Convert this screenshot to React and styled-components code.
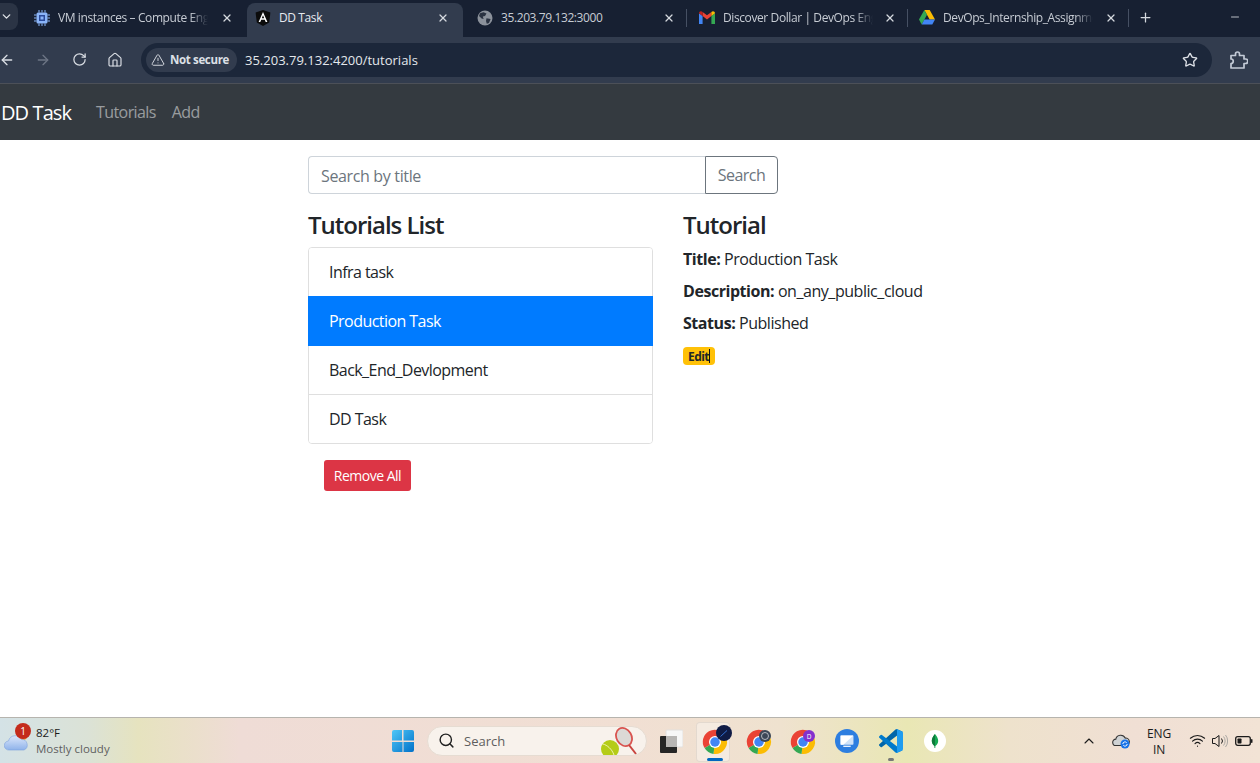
import React from "react";
import styled, { createGlobalStyle } from "styled-components";
import {
  ArrowLeft,
  ArrowRight,
  RotateCw,
  Home,
  TriangleAlert,
  Star,
  X,
  Plus,
  Minus,
  ChevronDown,
  ChevronUp,
  Search as SearchIcon,
  Wifi,
} from "lucide-react";

const Global = createGlobalStyle`
  html, body { margin: 0; padding: 0; height: 100%; overflow: hidden; }
  body { font-family: "Open Sans", "Noto Sans", sans-serif; color: #212529; background: #fff; }
  #root { height: 100%; }
  * { box-sizing: border-box; }
`;

const Screen = styled.div`
  width: 1260px;
  height: 763px;
  display: flex;
  flex-direction: column;
  overflow: hidden;
`;

/* browser chrome */
const TabStrip = styled.div`
  height: 37px;
  background: #172032;
  display: flex;
  align-items: flex-end;
  color: #c7ccd4;
  flex: none;
`;

const TabSearch = styled.div`
  width: 18px;
  height: 27px;
  margin: 0 8px 7px 0;
  background: #2b3445;
  border-radius: 0 8px 8px 0;
  display: flex;
  align-items: center;
  justify-content: flex-start;
  color: #dfe3e8;
`;

const Tab = styled.div`
  position: relative;
  width: ${(p) => (p.$active ? "216px" : "221px")};
  margin-right: ${(p) => (p.$active ? "5px" : "0")};
  height: 34px;
  display: flex;
  align-items: center;
  padding: 0 0 5px ${(p) => p.$pad || 8}px;
  border-radius: 8px 8px 0 0;
  background: ${(p) => (p.$active ? "#323c4e" : "transparent")};
  color: ${(p) => (p.$active ? "#e6e9ee" : "#c7ccd4")};

  &::after {
    content: "";
    display: ${(p) => (p.$sep ? "block" : "none")};
    position: absolute;
    right: 2px;
    top: 6px;
    height: 18px;
    width: 1px;
    background: #465063;
  }
`;

const TabIcon = styled.span`
  width: 16px;
  height: 16px;
  flex: none;
  display: flex;
  align-items: center;
  justify-content: center;
`;

const TabTitle = styled.span`
  width: 150px;
  margin-left: 8px;
  font-size: 12px;
  letter-spacing: -0.4px;
  white-space: nowrap;
  overflow: hidden;
  -webkit-mask-image: ${(p) =>
    p.$fade ? "linear-gradient(to right, #000 88%, transparent)" : "none"};
  mask-image: ${(p) =>
    p.$fade ? "linear-gradient(to right, #000 88%, transparent)" : "none"};
`;

const TabClose = styled.span`
  margin-left: auto;
  margin-right: 14px;
  display: flex;
  color: #d5d9df;
`;

const NewTab = styled.span`
  display: flex;
  margin: 0 0 12px 7px;
  color: #d5d9df;
`;

const WindowButton = styled.span`
  display: flex;
  margin: 0 19px 14px auto;
  color: #f0f2f5;
`;

const Toolbar = styled.div`
  height: 47px;
  flex: none;
  background: #323c4e;
  border-bottom: 1px solid #4c5058;
  display: flex;
  align-items: center;
  padding-bottom: 1px;
  color: #d5d9df;
`;

const NavButton = styled.span`
  width: 36px;
  display: flex;
  justify-content: center;
  color: ${(p) => (p.$off ? "#6d7585" : "#d9dde3")};
`;

const NavGroup = styled.div`
  display: flex;
  margin-left: -11px;
`;

const AddressBar = styled.div`
  width: 1071px;
  height: 34px;
  margin-left: 8px;
  border-radius: 17px;
  background: #1c273a;
  display: flex;
  align-items: center;
  padding: 0 14px 0 5px;
`;

const SecurityChip = styled.div`
  width: 91px;
  height: 24px;
  border-radius: 12px;
  background: #323c4e;
  display: flex;
  align-items: center;
  gap: 5px;
  padding-left: 5px;
  font-size: 11.5px;
  font-weight: 700;
  letter-spacing: -0.35px;
  color: #dde0e6;
  white-space: nowrap;
`;

const Url = styled.span`
  margin-left: 8px;
  font-size: 13px;
  letter-spacing: 0;
  color: #e4e7ec;
`;

const BarEnd = styled.span`
  margin-left: auto;
  display: flex;
  color: #dde0e6;
`;

const Extensions = styled.span`
  margin-left: 16px;
  display: flex;
`;

/* app */
const NavBar = styled.nav`
  height: 56px;
  flex: none;
  background: #343a40;
  display: flex;
  align-items: center;
  padding-left: 1px;
`;

const Brand = styled.a`
  font-size: 20px;
  letter-spacing: -0.9px;
  color: #fff;
  margin-right: 25px;
`;

const NavLink = styled.a`
  font-size: 16px;
  letter-spacing: -0.6px;
  color: rgba(255, 255, 255, 0.5);
  margin-right: 16px;
`;

const Page = styled.main`
  flex: 1;
  background: #fff;
  padding: 16px 0 0 308px;
`;

const SearchRow = styled.div`
  display: flex;
  width: 470px;
  height: 38px;
  margin-bottom: 16px;
`;

const SearchInput = styled.div`
  flex: 1;
  border: 1px solid #ced4da;
  border-right: 0;
  border-radius: 4px 0 0 4px;
  padding: 2px 12px 0;
  display: flex;
  align-items: center;
  font-size: 16px;
  letter-spacing: -0.35px;
  color: #6c757d;
`;

const SearchButton = styled.div`
  width: 73px;
  border: 1px solid #6c757d;
  border-radius: 0 4px 4px 0;
  display: flex;
  align-items: center;
  justify-content: center;
  font-size: 16px;
  letter-spacing: -0.5px;
  color: #6c757d;
`;

const Columns = styled.div`
  display: grid;
  grid-template-columns: 345px 300px;
  column-gap: 30px;
`;

const Heading = styled.h4`
  margin: 0 0 7px;
  font-size: 24px;
  line-height: 30px;
  font-weight: 600;
  letter-spacing: -1px;
  color: #212529;
`;

const List = styled.ul`
  list-style: none;
  margin: 0;
  padding: 0;
  border: 1px solid #dfdfdf;
  border-radius: 4px;
`;

const Item = styled.li`
  height: ${(p) => (p.$active ? "50px" : p.$line ? "49px" : "48px")};
  margin: ${(p) => (p.$active ? "0 -1px" : "0")};
  padding-left: ${(p) => (p.$active ? "21px" : "20px")};
  display: flex;
  align-items: center;
  font-size: 16px;
  letter-spacing: -0.55px;
  background: ${(p) => (p.$active ? "#007bff" : "#fff")};
  color: ${(p) => (p.$active ? "#fff" : "#212529")};
  border-top: ${(p) => (p.$line ? "1px solid #dfdfdf" : "0")};

  &:first-child {
    border-radius: 3px 3px 0 0;
  }

  &:last-child {
    border-radius: 0 0 3px 3px;
  }
`;

const DangerButton = styled.div`
  width: 87px;
  height: 31px;
  margin: 16px 0 0 16px;
  border-radius: 3px;
  background: #dc3545;
  color: #fff;
  font-size: 14px;
  letter-spacing: -0.5px;
  display: flex;
  align-items: center;
  justify-content: center;
`;

const Field = styled.div`
  font-size: 16px;
  line-height: 24px;
  letter-spacing: -0.45px;
  margin-bottom: 8px;

  strong {
    font-weight: 700;
  }
`;

const Badge = styled.span`
  display: inline-flex;
  align-items: center;
  justify-content: center;
  width: 32px;
  height: 18px;
  margin-top: 4px;
  border-radius: 4px;
  background: #ffc107;
  font-size: 12px;
  font-weight: 700;
  letter-spacing: -0.6px;
  color: #212529;
`;

const Caret = styled.span`
  display: inline-block;
  width: 1px;
  height: 14px;
  background: #111;
`;

/* taskbar */
const Taskbar = styled.footer`
  height: 46px;
  flex: none;
  border-top: 1px solid #b6b4ae;
  background: linear-gradient(
    90deg,
    #d4e2e6 0%,
    #dbe2d6 7%,
    #e6e3bf 11%,
    #efdcd6 19%,
    #f1dfd3 50%,
    #efe2cf 62%,
    #e9e7b4 72%,
    #eee2cc 80%,
    #f0dfd4 90%,
    #f2e3d5 100%
  );
  display: flex;
  align-items: center;
`;

const Weather = styled.div`
  position: relative;
  width: 391px;
  flex: none;
  display: flex;
  align-items: center;
  padding-left: 4px;
  height: 100%;
`;

const WeatherBadge = styled.span`
  position: absolute;
  left: 15px;
  top: 5px;
  width: 16px;
  height: 16px;
  border-radius: 50%;
  background: #c42b1c;
  color: #fff;
  font-size: 10px;
  display: flex;
  align-items: center;
  justify-content: center;
`;

const WeatherText = styled.div`
  margin-left: 6px;
  font-size: 11.5px;
  line-height: 16px;
  letter-spacing: 0;
  color: #1b1b1b;

  span {
    display: block;
    color: #5f5f5f;
  }
`;

const TaskSearch = styled.div`
  position: relative;
  width: 220px;
  height: 30px;
  margin-left: 12px;
  border-radius: 15px;
  background: #f8f2ec;
  border: 1px solid #e6dcd2;
  display: flex;
  align-items: center;
  padding-left: 10px;
  font-size: 13px;
  color: #5e5e5e;
  gap: 9px;
  overflow: hidden;
`;

const SearchArt = styled.svg`
  position: absolute;
  right: 8px;
  bottom: -1px;
`;

const TaskIcon = styled.span`
  position: relative;
  width: 44px;
  height: 46px;
  flex: none;
  display: flex;
  align-items: center;
  justify-content: center;
  margin-left: ${(p) => p.$ml || 0}px;

  &::before {
    content: "";
    display: ${(p) => (p.$focus ? "block" : "none")};
    position: absolute;
    left: 3px;
    right: 7px;
    top: 4px;
    bottom: 2px;
    border-radius: 4px;
    background: rgba(255, 255, 255, 0.35);
    border: 1px solid rgba(220, 210, 200, 0.7);
  }

  &::after {
    content: "";
    display: ${(p) => (p.$open ? "block" : "none")};
    position: absolute;
    bottom: 3px;
    left: 50%;
    transform: translateX(-50%);
    width: ${(p) => (p.$focus ? "16px" : "6px")};
    height: 3px;
    border-radius: 2px;
    background: ${(p) => (p.$focus ? "#0067c0" : "#777")};
  }

  svg {
    position: relative;
    z-index: 1;
  }
`;

const Tray = styled.div`
  margin-left: auto;
  display: flex;
  align-items: center;
  color: #1b1b1b;
`;

const TrayItem = styled.span`
  display: flex;
  margin-right: ${(p) => p.$mr || 0}px;
`;

const Lang = styled.div`
  width: 32px;
  margin-right: 14px;
  padding-top: 2px;
  text-align: center;
  font-size: 12px;
  line-height: 16px;
  letter-spacing: -0.1px;
`;

/* drawings */
const ChipIcon = () => (
  <svg width="16" height="16" viewBox="0 0 16 16">
    <rect x="2.5" y="2.5" width="11" height="11" rx="1.5" fill="#8ab4f8" />
    <rect x="5" y="5" width="6" height="6" fill="#2a4a9a" />
    <rect x="6.5" y="6.5" width="3" height="3" fill="#8ab4f8" />
    <path d="M5 0v2.5M8 0v2.5M11 0v2.5M5 13.5V16M8 13.5V16M11 13.5V16M0 5h2.5M0 8h2.5M0 11h2.5M13.5 5H16M13.5 8H16M13.5 11H16" stroke="#8ab4f8" strokeWidth="1" />
  </svg>
);

const AngularIcon = () => (
  <svg width="16" height="16" viewBox="0 0 16 16">
    <path d="M8 0 15.4 2.6 14.2 12.4 8 16 1.8 12.4.6 2.6Z" fill="#0b0b0b" />
    <path d="M8 2 3.6 12h1.7l.9-2.3h3.6l.9 2.3h1.7ZM6.8 8.3 8 5.3l1.2 3Z" fill="#fff" />
  </svg>
);

const GlobeIcon = () => (
  <svg width="16" height="16" viewBox="0 0 16 16">
    <circle cx="8" cy="8" r="7.5" fill="#8b919b" />
    <path d="M3 3.2 6.5 2.2 9.5 3.6 8 6 5.8 6.4 6.6 9 4.6 8.6 2 6ZM9.5 8.2 13.6 9 12 13 9.8 13.8 9 11Z" fill="#2a3241" />
  </svg>
);

const GmailIcon = () => (
  <svg width="16" height="13" viewBox="0 0 16 13">
    <path d="M0 13V2.2L3.6 5V13Z" fill="#4285f4" />
    <path d="M16 13V2.2L12.4 5V13Z" fill="#34a853" />
    <path d="M3.6 5 8 8.4 12.4 5V1L8 4.3 3.6 1Z" fill="#ea4335" />
    <path d="M0 2.2C0 .4 2.2-.6 3.6 1V5Z" fill="#c5221f" />
    <path d="M16 2.2C16 .4 13.8-.6 12.4 1V5Z" fill="#fbbc04" />
  </svg>
);

const DriveIcon = () => (
  <svg width="16" height="15" viewBox="0 0 16 15">
    <path d="M5.3 0H10.7L16 9.6H10.7Z" fill="#fbbc04" />
    <path d="M5.3 0 0 9.6 2.7 14.6 8 4.8Z" fill="#34a853" />
    <path d="M2.7 14.6H13.3L16 9.6H5.4Z" fill="#4285f4" />
  </svg>
);

const PuzzleIcon = () => (
  <svg width="20" height="20" viewBox="0 0 20 20">
    <path
      d="M3 5.5H7.500V4a2 2 0 0 1 4 0V5.500H16V9H17.500a2.200 2.200 0 0 1 0 4.500H16V18H3V13.500a2.200 2.200 0 0 0 0-4.500Z"
      fill="none"
      stroke="#c3cad6"
      strokeWidth="1.7"
      strokeLinejoin="round"
    />
  </svg>
);

const ChromeIcon = ({ children }) => (
  <svg width="26" height="26" viewBox="0 0 52 52" overflow="visible">
    <g transform="translate(2 4)">
      <path d="M24 24 45 12.5A24 24 0 1 0 3.2 36Z" fill="#ea4335" />
      <path d="M24 24 45 12.5A24 24 0 0 1 21 47.8Z" fill="#fbbc04" />
      <path d="M24 24 21 47.8A24 24 0 0 1 3.2 36Z" fill="#34a853" />
      <circle cx="24" cy="24" r="12" fill="#fff" />
      <circle cx="24" cy="24" r="9.5" fill="#4285f4" />
    </g>
    {children}
  </svg>
);

const WinLogo = () => (
  <svg width="24" height="24" viewBox="0 0 24 24">
    <defs>
      <linearGradient id="win" x1="0" y1="0" x2="1" y2="1">
        <stop offset="0" stopColor="#4fc7f7" />
        <stop offset="1" stopColor="#0071c9" />
      </linearGradient>
    </defs>
    <path d="M1 3a2 2 0 0 1 2-2h8v10.500H1ZM12.500 1H21a2 2 0 0 1 2 2v8.500H12.500ZM1 13h10.500v10H3a2 2 0 0 1-2-2ZM12.500 13H23v8a2 2 0 0 1-2 2H12.500Z" fill="url(#win)" />
  </svg>
);

const Cloud = () => (
  <svg width="26" height="22" viewBox="0 0 26 22">
    <defs>
      <linearGradient id="cl" x1="0" y1="0" x2="0" y2="1">
        <stop offset="0" stopColor="#dce7fb" />
        <stop offset="1" stopColor="#8fb3ea" />
      </linearGradient>
    </defs>
    <circle cx="19" cy="6" r="4" fill="#f2a035" />
    <path d="M5 20a4.500 4.500 0 0 1-.5-9 7 7 0 0 1 13-1.500A5.500 5.500 0 0 1 20 20Z" fill="url(#cl)" stroke="#7ea3dd" strokeWidth=".6" />
  </svg>
);

const TaskView = () => (
  <svg width="24" height="24" viewBox="0 0 24 24">
    <rect x="7" y="1" width="17" height="17" rx="1" fill="#f7f7f7" stroke="#e2e0de" />
    <rect x="1" y="7" width="17" height="17" rx="1" fill="#262626" />
    <rect x="7" y="7" width="11" height="11" fill="#b8b6b4" />
  </svg>
);

const RemoteIcon = () => (
  <svg width="24" height="24" viewBox="0 0 26 26">
    <circle cx="13" cy="13" r="13" fill="#2d7ee0" />
    <rect x="6" y="7" width="14" height="10" rx="1" fill="#cfe2f8" />
    <path d="M6 7h14L9 17H6Z" fill="#fff" />
    <rect x="9" y="18" width="8" height="1.500" fill="#e8f1fc" />
  </svg>
);

const VsCode = () => (
  <svg width="24" height="24" viewBox="0 0 100 100">
    <path d="M96.500 10.800 75.900.9a6.200 6.200 0 0 0-7.100 1.200L1.400 63.500a4.200 4.200 0 0 0 0 6.100l5.500 5a4.200 4.200 0 0 0 5.300.2L93.500 13.200a4.100 4.100 0 0 1 6.500 3.300v-.2a6.200 6.200 0 0 0-3.500-5.500Z" fill="#0065a9" />
    <path d="M96.500 89.200 75.900 99.100a6.200 6.200 0 0 1-7.100-1.200L1.400 36.500a4.200 4.200 0 0 1 0-6.100l5.500-5a4.200 4.200 0 0 1 5.300-.2l81.300 61.600a4.100 4.100 0 0 0 6.500-3.300v.2a6.200 6.200 0 0 1-3.500 5.500Z" fill="#007acc" />
    <path d="M75.900 99.100a6.200 6.200 0 0 1-7.100-1.200c2.300 2.300 6.200.7 6.200-2.600V4.700c0-3.300-3.900-4.900-6.200-2.600A6.200 6.200 0 0 1 75.900.9l20.600 9.900A6.200 6.200 0 0 1 100 16.400v67.200a6.200 6.200 0 0 1-3.500 5.600Z" fill="#1f9cf0" />
  </svg>
);

const Mongo = () => (
  <svg width="24" height="24" viewBox="0 0 24 24">
    <circle cx="12" cy="12" r="11" fill="#fff" />
    <path d="M12 5c2 2.500 3.200 4.500 3.200 7 0 2.500-1.800 4.200-2.800 5l-.1 2h-.6l-.1-2c-1-.8-2.800-2.500-2.800-5 0-2.500 1.200-4.500 3.200-7Z" fill="#13aa52" />
    <path d="M12 5v14h-.3l-.1-2c-1-.8-2.800-2.500-2.800-5 0-2.500 1.200-4.500 3.200-7Z" fill="#0d7a3b" />
  </svg>
);

const TrayCloud = () => (
  <svg width="18" height="16" viewBox="0 0 18 16">
    <path d="M4 12.500a3.200 3.200 0 0 1-.2-6.400 5 5 0 0 1 9.400-1A3.500 3.500 0 0 1 14 12.500Z" fill="#cfd2d4" stroke="#333" strokeWidth="1.100" />
    <circle cx="13" cy="11" r="4.500" fill="#1a73e8" />
    <path d="M10.800 11a2.200 2.200 0 0 1 3.900-1.300M15.200 11a2.200 2.200 0 0 1-3.900 1.300" fill="none" stroke="#fff" strokeWidth="1" />
  </svg>
);

const VolumeIcon = () => (
  <svg width="17" height="16" viewBox="0 0 17 16">
    <path d="M1.500 5.500H4L8 2.500V13.500L4 10.500H1.500Z" fill="none" stroke="#1b1b1b" strokeWidth="1" strokeLinejoin="round" />
    <path d="M10.500 5.500a4 4 0 0 1 0 5" fill="none" stroke="#1b1b1b" strokeWidth="1" />
    <path d="M12.500 3.500a7 7 0 0 1 0 9M14.500 2a9.500 9.500 0 0 1 0 12" fill="none" stroke="#a9a7a2" strokeWidth="1" />
  </svg>
);

const BatteryIcon = () => (
  <svg width="18" height="12" viewBox="0 0 18 12">
    <rect x=".7" y="1.700" width="14.600" height="8.600" rx="2" fill="none" stroke="#1b1b1b" strokeWidth="1.300" />
    <rect x="2.500" y="3.500" width="4" height="5" rx=".7" fill="#1b1b1b" />
    <rect x="16" y="4" width="1.500" height="4" rx=".7" fill="#1b1b1b" />
  </svg>
);

const App = () => (
  <Screen>
    <Global />
    <TabStrip>
      <TabSearch>
        <ChevronDown size={13} strokeWidth={2.5} />
      </TabSearch>
      <Tab>
        <TabIcon><ChipIcon /></TabIcon>
        <TabTitle $fade>VM instances – Compute Engine</TabTitle>
        <TabClose><X size={12} strokeWidth={2.5} /></TabClose>
      </Tab>
      <Tab $active $pad={8}>
        <TabIcon><AngularIcon /></TabIcon>
        <TabTitle>DD Task</TabTitle>
        <TabClose><X size={12} strokeWidth={2.5} /></TabClose>
      </Tab>
      <Tab $sep $pad={9}>
        <TabIcon><GlobeIcon /></TabIcon>
        <TabTitle>35.203.79.132:3000</TabTitle>
        <TabClose><X size={12} strokeWidth={2.5} /></TabClose>
      </Tab>
      <Tab $sep $pad={10}>
        <TabIcon><GmailIcon /></TabIcon>
        <TabTitle $fade>Discover Dollar | DevOps Engineer</TabTitle>
        <TabClose><X size={12} strokeWidth={2.5} /></TabClose>
      </Tab>
      <Tab $sep $pad={9}>
        <TabIcon><DriveIcon /></TabIcon>
        <TabTitle $fade>DevOps_Internship_Assignment</TabTitle>
        <TabClose><X size={12} strokeWidth={2.5} /></TabClose>
      </Tab>
      <NewTab><Plus size={15} strokeWidth={2} /></NewTab>
      <WindowButton><Minus size={12} strokeWidth={1.5} /></WindowButton>
    </TabStrip>

    <Toolbar>
      <NavGroup>
        <NavButton><ArrowLeft size={16} strokeWidth={2} /></NavButton>
        <NavButton $off><ArrowRight size={16} strokeWidth={2} /></NavButton>
        <NavButton><RotateCw size={15} strokeWidth={2} /></NavButton>
        <NavButton><Home size={16} strokeWidth={1.8} /></NavButton>
      </NavGroup>
      <AddressBar>
        <SecurityChip>
          <TriangleAlert size={14} strokeWidth={1.6} />
          Not secure
        </SecurityChip>
        <Url>35.203.79.132:4200/tutorials</Url>
        <BarEnd><Star size={16} strokeWidth={2} /></BarEnd>
      </AddressBar>
      <Extensions><PuzzleIcon /></Extensions>
    </Toolbar>

    <NavBar>
      <Brand>DD Task</Brand>
      <NavLink>Tutorials</NavLink>
      <NavLink>Add</NavLink>
    </NavBar>

    <Page>
      <SearchRow>
        <SearchInput>Search by title</SearchInput>
        <SearchButton>Search</SearchButton>
      </SearchRow>
      <Columns>
        <div>
          <Heading>Tutorials List</Heading>
          <List>
            <Item>Infra task</Item>
            <Item $active>Production Task</Item>
            <Item>Back_End_Devlopment</Item>
            <Item $line>DD Task</Item>
          </List>
          <DangerButton>Remove All</DangerButton>
        </div>
        <div>
          <Heading>Tutorial</Heading>
          <Field><strong>Title:</strong> Production Task</Field>
          <Field><strong>Description:</strong> on_any_public_cloud</Field>
          <Field><strong>Status:</strong> Published</Field>
          <Badge>Edit<Caret /></Badge>
        </div>
      </Columns>
    </Page>

    <Taskbar>
      <Weather>
        <Cloud />
        <WeatherBadge>1</WeatherBadge>
        <WeatherText>
          82°F
          <span>Mostly cloudy</span>
        </WeatherText>
      </Weather>
      <WinLogo />
      <TaskSearch>
        <SearchIcon size={17} strokeWidth={2} color="#222" />
        Search
        <SearchArt width="38" height="30" viewBox="0 0 38 30">
          <ellipse cx="24" cy="11" rx="7.500" ry="9.500" transform="rotate(-30 24 11)" fill="#dcd9d6" stroke="#d9534f" strokeWidth="1.800" />
          <path d="M29 19 36 28" stroke="#c9453f" strokeWidth="2" />
          <circle cx="10" cy="23" r="9" fill="#b5cc18" />
          <path d="M3 18c4 1 9 5 11 11" fill="none" stroke="#eef3b0" strokeWidth="1" />
        </SearchArt>
      </TaskSearch>
      <TaskIcon $ml={2}><TaskView /></TaskIcon>
      <TaskIcon $focus $open>
        <ChromeIcon>
          <circle cx="44" cy="10" r="16" fill="#0f1b45" />
          <path d="M37 17 50 5" stroke="#3d8bff" strokeWidth="1.500" />
        </ChromeIcon>
      </TaskIcon>
      <TaskIcon>
        <ChromeIcon>
          <circle cx="38" cy="16" r="12" fill="#3b4656" />
          <circle cx="38" cy="16" r="7" fill="none" stroke="#d9dce0" strokeWidth="1.500" />
        </ChromeIcon>
      </TaskIcon>
      <TaskIcon>
        <ChromeIcon>
          <circle cx="38" cy="16" r="12" fill="#8430ce" />
          <text x="38" y="21" fontSize="13" fill="#fff" textAnchor="middle" fontFamily="Open Sans, sans-serif">D</text>
        </ChromeIcon>
      </TaskIcon>
      <TaskIcon><RemoteIcon /></TaskIcon>
      <TaskIcon $open><VsCode /></TaskIcon>
      <TaskIcon><Mongo /></TaskIcon>
      <Tray>
        <TrayItem $mr={15}><ChevronUp size={16} strokeWidth={1.6} /></TrayItem>
        <TrayItem $mr={13}><TrayCloud /></TrayItem>
        <Lang>ENG<br />IN</Lang>
        <TrayItem $mr={5}><Wifi size={17} strokeWidth={1.6} /></TrayItem>
        <TrayItem $mr={7}><VolumeIcon /></TrayItem>
        <TrayItem $mr={7}><BatteryIcon /></TrayItem>
      </Tray>
    </Taskbar>
  </Screen>
);

export default App;
